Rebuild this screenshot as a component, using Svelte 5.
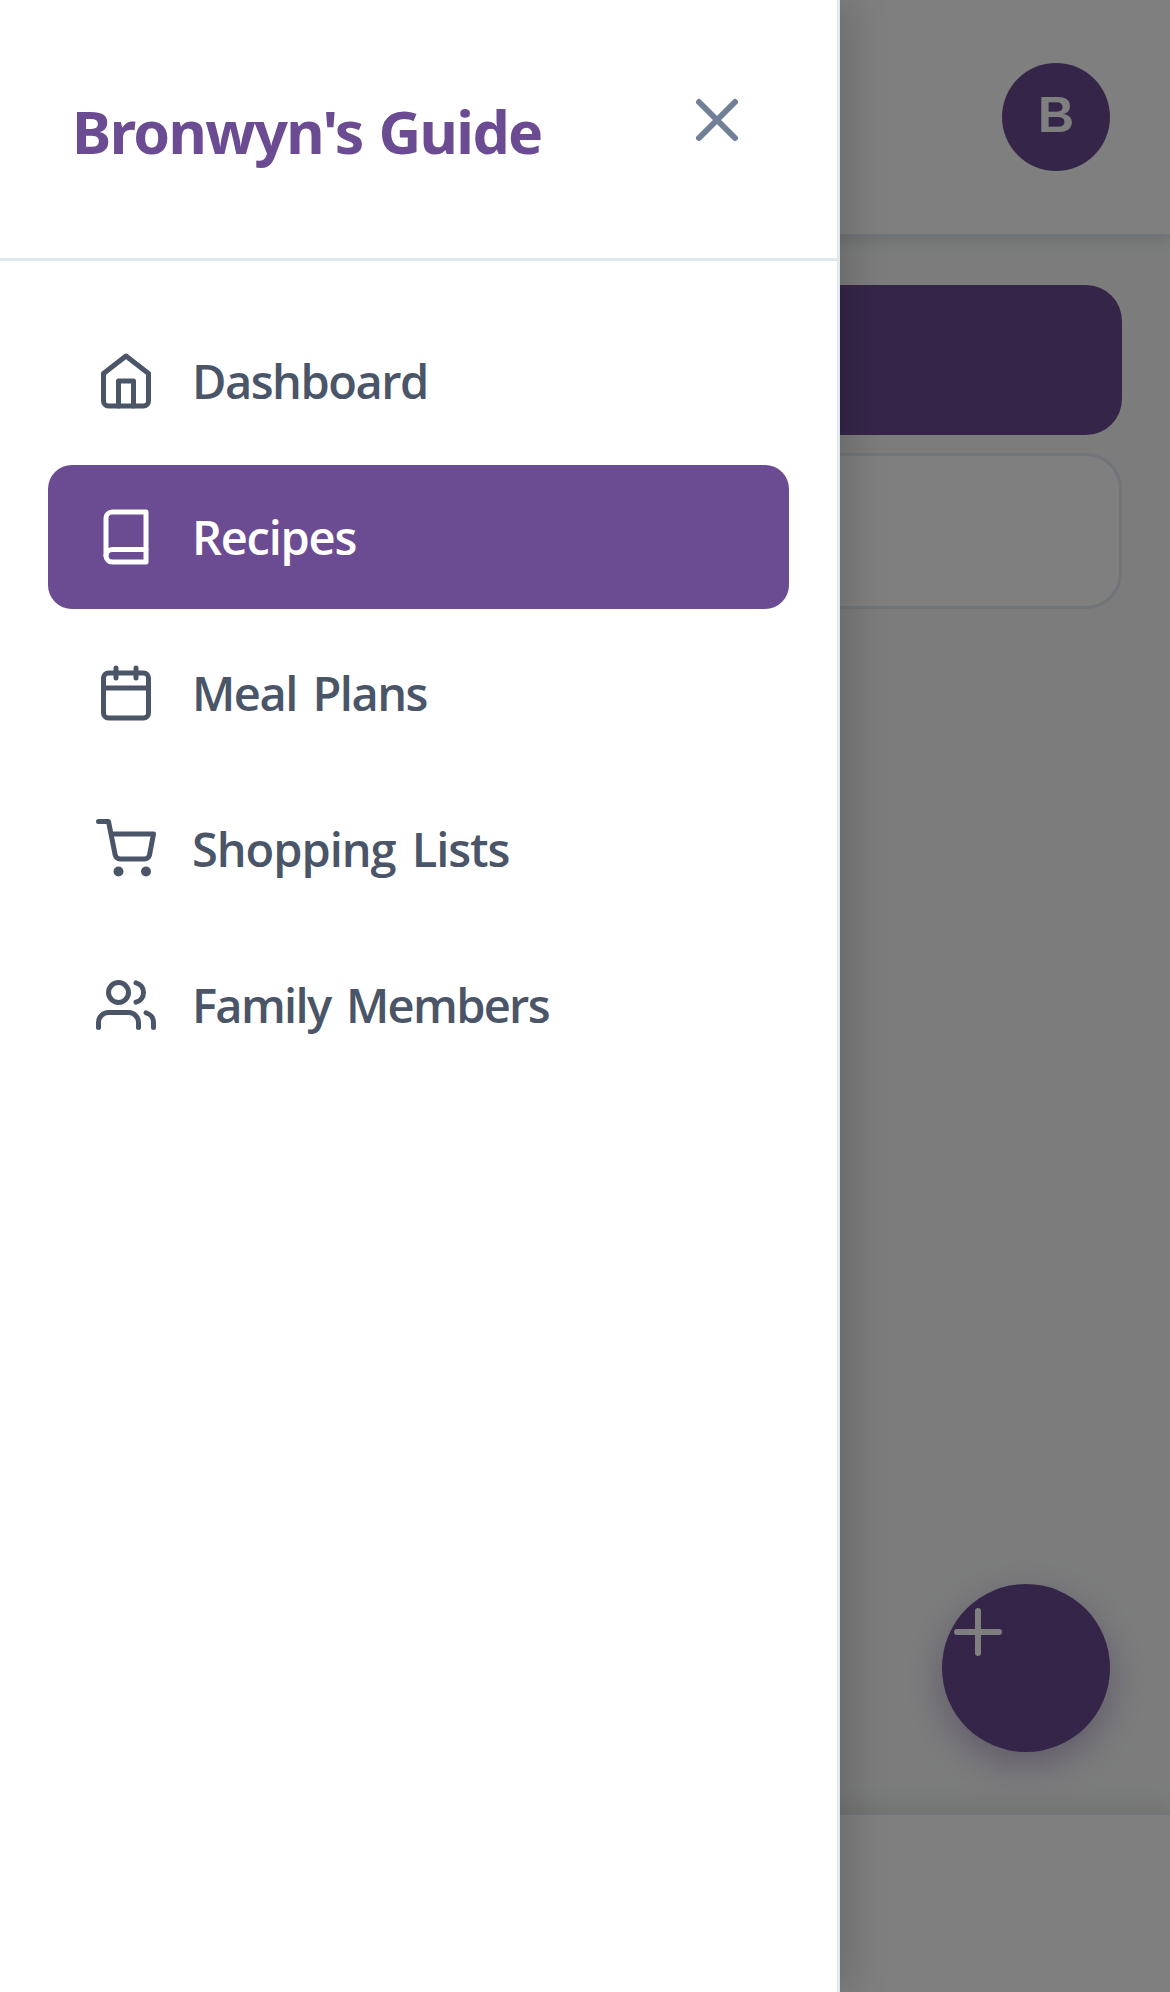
<script>
  // `tracking` is the letter spacing of each label, in pixels
  const items = [
    {
      label: 'Dashboard',
      tracking: -1.5,
      paths: ['M3 9l9-7 9 7v11a2 2 0 0 1-2 2H5a2 2 0 0 1-2-2z', 'M9 22V12h6v10']
    },
    {
      label: 'Recipes',
      tracking: -1.25,
      active: true,
      paths: [
        'M4 19.5A2.5 2.5 0 0 1 6.5 17H20',
        'M6.5 2H20v20H6.5A2.5 2.5 0 0 1 4 19.5v-15A2.5 2.5 0 0 1 6.5 2z'
      ]
    },
    {
      label: 'Meal Plans',
      tracking: -1.5,
      paths: [
        'M5 4h14a2 2 0 0 1 2 2v14a2 2 0 0 1-2 2H5a2 2 0 0 1-2-2V6a2 2 0 0 1 2-2z',
        'M16 2v4',
        'M8 2v4',
        'M3 10h18'
      ]
    },
    {
      label: 'Shopping Lists',
      tracking: -1.05,
      paths: [
        'M8 21a1 1 0 1 0 2 0a1 1 0 1 0-2 0',
        'M19 21a1 1 0 1 0 2 0a1 1 0 1 0-2 0',
        'M1 1h4l2.68 13.39a2 2 0 0 0 2 1.61h9.72a2 2 0 0 0 2-1.61L23 6H6'
      ]
    },
    {
      label: 'Family Members',
      tracking: -1.68,
      paths: [
        'M17 21v-2a4 4 0 0 0-4-4H5a4 4 0 0 0-4 4v2',
        'M5 7a4 4 0 1 0 8 0a4 4 0 1 0-8 0',
        'M23 21v-2a4 4 0 0 0-3-3.87',
        'M16 3.13a4 4 0 0 1 0 7.75'
      ]
    }
  ];
</script>

<div class="app">
  <header class="topbar">
    <button class="avatar">B</button>
  </header>
  <main class="content">
    <div class="tab selected"></div>
    <div class="tab"></div>
  </main>
  <footer class="bottombar"></footer>
  <button class="fab" aria-label="Add">
    <svg viewBox="0 0 24 24"><path d="M12 5v14M5 12h14" /></svg>
  </button>

  <div class="overlay"></div>

  <aside class="drawer">
    <div class="drawer-head">
      <h2>Bronwyn's Guide</h2>
      <button class="close" aria-label="Close">
        <svg viewBox="0 0 24 24"><path d="M18 6L6 18M6 6l12 12" /></svg>
      </button>
    </div>
    <nav>
      {#each items as item}
        <a class="item" class:active={item.active} href="#top">
          <svg viewBox="0 0 24 24">
            {#each item.paths as d}<path {d} />{/each}
          </svg>
          <span style:letter-spacing="{item.tracking}px">{item.label}</span>
        </a>
      {/each}
    </nav>
  </aside>
</div>

<style>
  :global(body) {
    margin: 0;
  }
  .app {
    position: relative;
    display: flex;
    flex-direction: column;
    width: 1170px;
    height: 1992px;
    overflow: hidden;
    background: #f8f9fa;
    font-family: 'Open Sans', 'Noto Sans', sans-serif;
  }
  svg {
    display: block;
    flex: none;
    fill: none;
    stroke: currentColor;
    stroke-width: 2;
    stroke-linecap: round;
    stroke-linejoin: round;
  }
  button {
    border: 0;
    padding: 0;
    margin: 0;
    background: none;
  }
  .topbar {
    box-sizing: border-box;
    display: flex;
    align-items: center;
    justify-content: flex-end;
    height: 237px;
    padding: 0 60px;
    background: #fff;
    border-bottom: 3px solid #e2e8f0;
    box-shadow: 0 6px 12px rgba(0, 0, 0, 0.1);
  }
  .avatar {
    width: 108px;
    height: 108px;
    padding-bottom: 5px;
    border-radius: 50%;
    background: #6b4c93;
    color: #fff;
    font: 700 50px 'Liberation Sans', Arial, sans-serif;
  }
  .content {
    flex: 1;
    display: flex;
    flex-direction: column;
    gap: 18px;
    padding: 48px;
  }
  .tab {
    height: 150px;
    border: 3px solid #e2e8f0;
    border-radius: 36px;
    background: #fff;
  }
  .tab.selected {
    border: 0;
    background: #6b4c93;
  }
  .bottombar {
    height: 177px;
    background: #fff;
    border-top: 3px solid #e2e8f0;
    box-shadow: 0 -6px 24px rgba(0, 0, 0, 0.1);
  }
  .fab {
    position: absolute;
    right: 60px;
    bottom: 240px;
    width: 168px;
    height: 168px;
    padding-bottom: 72px;
    border-radius: 50%;
    background: #6b4c93;
    color: #fff;
    box-shadow: 0 12px 36px rgba(107, 76, 147, 0.4);
  }
  .fab svg,
  .close svg {
    width: 72px;
    height: 72px;
  }
  .overlay {
    position: absolute;
    inset: 0;
    background: rgba(0, 0, 0, 0.5);
  }
  .drawer {
    position: absolute;
    inset: 0 auto 0 0;
    box-sizing: border-box;
    width: 840px;
    background: #fff;
    border-right: 3px solid #e2e8f0;
    box-shadow: 12px 0 36px rgba(0, 0, 0, 0.15);
  }
  .drawer-head {
    display: flex;
    justify-content: space-between;
    align-items: flex-start;
    height: 198px;
    padding: 60px 60px 0 72px;
    border-bottom: 3px solid #e2e8f0;
  }
  h2 {
    margin: 0;
    padding-top: 30px;
    font-family: 'Noto Sans', sans-serif;
    font-size: 59px;
    line-height: 82px;
    font-weight: 700;
    letter-spacing: -1.6px;
    word-spacing: 2px;
    color: #6b4c93;
    white-space: nowrap;
  }
  .close {
    padding: 24px;
    color: #718096;
  }
  nav {
    display: flex;
    flex-direction: column;
    gap: 12px;
    padding: 48px;
  }
  .item {
    display: flex;
    align-items: center;
    gap: 36px;
    height: 144px;
    padding: 0 48px;
    border-radius: 24px;
    color: #4a5568;
    font-size: 47px;
    font-weight: 600;
    line-height: 72px;
    word-spacing: 5px;
    text-decoration: none;
    white-space: nowrap;
  }
  .item.active {
    background: #6b4c93;
    color: #fff;
  }
  .item svg {
    width: 60px;
    height: 60px;
  }
</style>
